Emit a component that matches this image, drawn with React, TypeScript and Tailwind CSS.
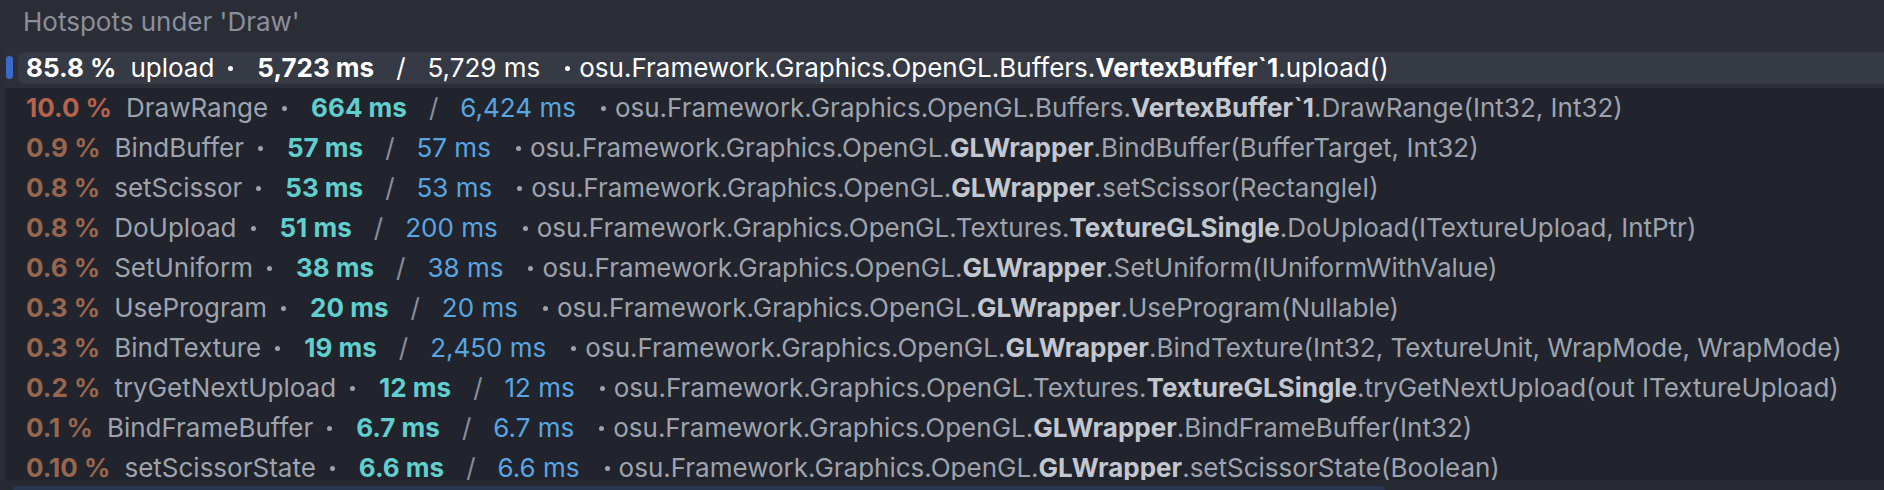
type Hotspot = {
  pct: string;
  name: string;
  self: string;
  total: string;
  ns: string;
  cls: string;
  method: string;
  hot?: boolean;
};

const hotspots: Hotspot[] = [
  { pct: "85.8 %", name: "upload", self: "5,723 ms", total: "5,729 ms", ns: "osu.Framework.Graphics.OpenGL.Buffers.", cls: "VertexBuffer`1", method: ".upload()" },
  { pct: "10.0 %", name: "DrawRange", self: "664 ms", total: "6,424 ms", ns: "osu.Framework.Graphics.OpenGL.Buffers.", cls: "VertexBuffer`1", method: ".DrawRange(Int32, Int32)", hot: true },
  { pct: "0.9 %", name: "BindBuffer", self: "57 ms", total: "57 ms", ns: "osu.Framework.Graphics.OpenGL.", cls: "GLWrapper", method: ".BindBuffer(BufferTarget, Int32)" },
  { pct: "0.8 %", name: "setScissor", self: "53 ms", total: "53 ms", ns: "osu.Framework.Graphics.OpenGL.", cls: "GLWrapper", method: ".setScissor(RectangleI)" },
  { pct: "0.8 %", name: "DoUpload", self: "51 ms", total: "200 ms", ns: "osu.Framework.Graphics.OpenGL.Textures.", cls: "TextureGLSingle", method: ".DoUpload(ITextureUpload, IntPtr)" },
  { pct: "0.6 %", name: "SetUniform", self: "38 ms", total: "38 ms", ns: "osu.Framework.Graphics.OpenGL.", cls: "GLWrapper", method: ".SetUniform(IUniformWithValue)" },
  { pct: "0.3 %", name: "UseProgram", self: "20 ms", total: "20 ms", ns: "osu.Framework.Graphics.OpenGL.", cls: "GLWrapper", method: ".UseProgram(Nullable)" },
  { pct: "0.3 %", name: "BindTexture", self: "19 ms", total: "2,450 ms", ns: "osu.Framework.Graphics.OpenGL.", cls: "GLWrapper", method: ".BindTexture(Int32, TextureUnit, WrapMode, WrapMode)" },
  { pct: "0.2 %", name: "tryGetNextUpload", self: "12 ms", total: "12 ms", ns: "osu.Framework.Graphics.OpenGL.Textures.", cls: "TextureGLSingle", method: ".tryGetNextUpload(out ITextureUpload)" },
  { pct: "0.1 %", name: "BindFrameBuffer", self: "6.7 ms", total: "6.7 ms", ns: "osu.Framework.Graphics.OpenGL.", cls: "GLWrapper", method: ".BindFrameBuffer(Int32)" },
  { pct: "0.10 %", name: "setScissorState", self: "6.6 ms", total: "6.6 ms", ns: "osu.Framework.Graphics.OpenGL.", cls: "GLWrapper", method: ".setScissorState(Boolean)" },
];

function Dot() {
  return <span className="inline-block size-[5px] shrink-0 rounded-full bg-current" />;
}

function Cells({ h, selected }: { h: Hotspot; selected?: boolean }) {
  const grey = selected ? "text-white" : "text-[#9ea3ae]";
  return (
    <div className="flex items-center whitespace-nowrap">
      <span className={`font-bold ${selected ? "text-white" : h.hot ? "text-[#b5634a]" : "text-[#98664f]"}`}>{h.pct}</span>
      <span className={`ml-[14px] ${grey}`}>{h.name}</span>
      <span className={`ml-[14px] flex ${grey}`}>
        <Dot />
      </span>
      <span className={`ml-[24px] font-bold ${selected ? "text-white" : "text-[#62cfcf]"}`}>{h.self}</span>
      <span className={`ml-[22px] ${selected ? "text-white" : "text-[#8a8f9a]"}`}>/</span>
      <span className={`ml-[22px] ${selected ? "text-white" : "text-[#59a6e2]"}`}>{h.total}</span>
      <span className={`ml-[25px] flex ${grey}`}>
        <Dot />
      </span>
      <span className={`ml-[9px] ${grey}`}>
        {h.ns}
        <span className={`font-bold ${selected ? "text-white" : "text-[#c3c7d0]"}`}>{h.cls}</span>
        {h.method}
      </span>
    </div>
  );
}

export default function App() {
  const [first, ...rest] = hotspots;
  return (
    <div
      className="flex h-[490px] w-[1884px] flex-col overflow-hidden bg-[#2a2d36] text-[26px]"
      style={{ fontFamily: "Inter, 'Noto Sans', sans-serif" }}
    >
      <div className="h-[48px] shrink-0 pl-[23px] leading-[44px] text-[#8a8f9b]">Hotspots under 'Draw'</div>

      <div className="ml-[5px] h-[432px] shrink-0 overflow-hidden bg-[#21242c]">
        <div className="relative flex h-[40px] items-center bg-[#2c2f38]">
          <span className="absolute left-[1px] top-[8px] h-[23px] w-[7px] rounded-full bg-[#3b6acb]" />
          <div className="ml-[13px] flex h-[32px] flex-1 items-center rounded-l-[8px] bg-[#363a45] pl-[8px] leading-[32px]">
            <Cells h={first} selected />
          </div>
        </div>
        {rest.map((h) => (
          <div key={h.name} className="flex h-[40px] items-center pl-[21px] leading-[40px]">
            <Cells h={h} />
          </div>
        ))}
      </div>

      <div className="flex h-[10px] shrink-0 items-end bg-[#272a33] pl-[13px]">
        <div className="h-[4px] w-[1372px] rounded-t-[8px] bg-[#283650]" />
      </div>
    </div>
  );
}
